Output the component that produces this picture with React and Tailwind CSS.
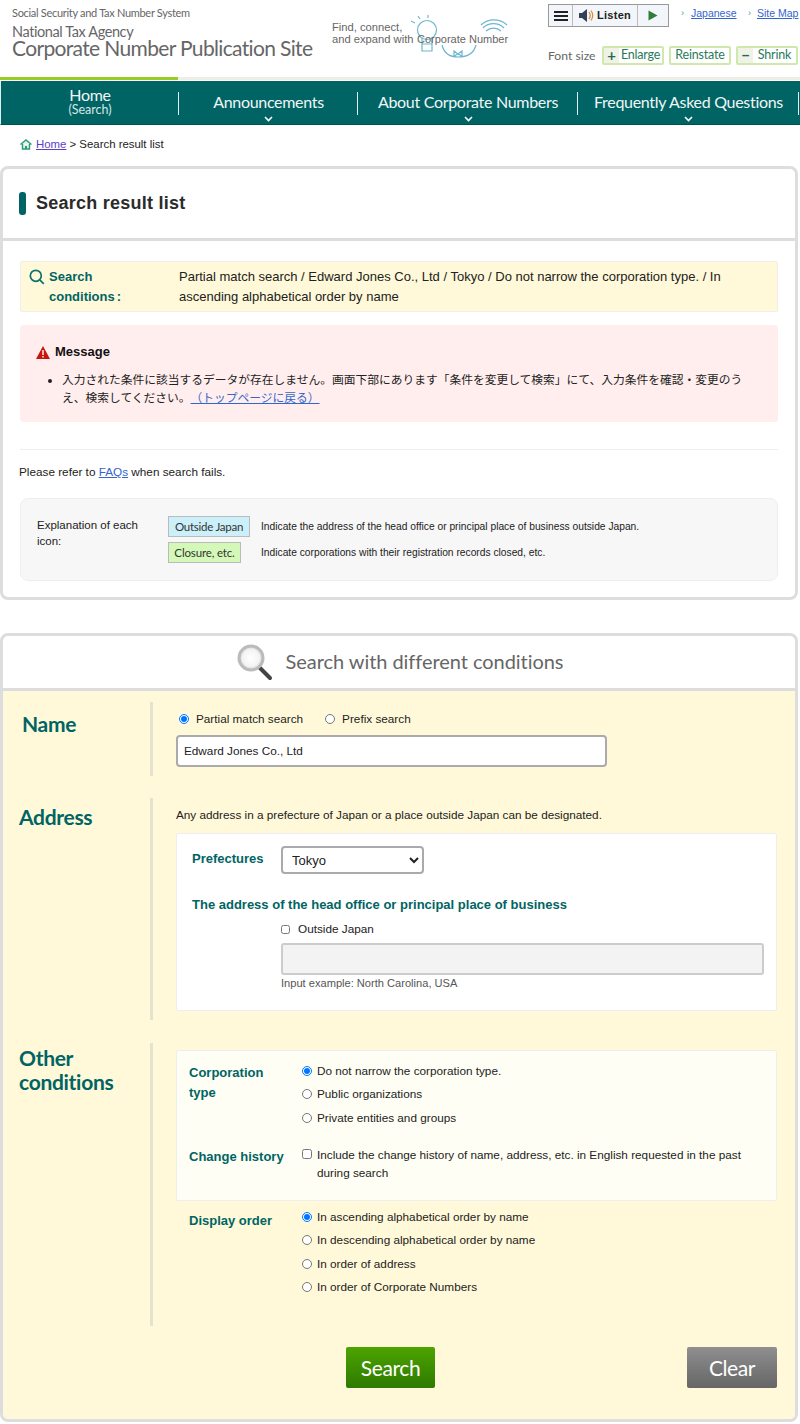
import React from "react";

const Chev = () => (
  <svg width="9" height="6" viewBox="0 0 9 6" className="block mx-auto">
    <path d="M1 1l3.500 3.500L8 1" fill="none" stroke="#fff" strokeWidth="1.600" />
  </svg>
);

const Radio = ({ label, checked, cls = "" }) => (
  <label className={`flex items-center gap-[5px] text-[11.750px] leading-[20px] text-[#222] whitespace-nowrap ${cls}`}>
    <input type="radio" readOnly checked={!!checked} className="m-0 w-[10px] h-[10px] accent-[#0075ff]" />
    <span>{label}</span>
  </label>
);

const Toolbar = () => (
  <div className="flex h-[23px] w-[121px] border border-[#999] bg-[#f2f5f9] shrink-0">
    <div className="w-[24px] flex flex-col justify-center gap-[2px] items-center border-r border-[#bbb]">
      <span className="block w-[14px] h-[2px] bg-[#222]" />
      <span className="block w-[14px] h-[2px] bg-[#222]" />
      <span className="block w-[14px] h-[2px] bg-[#222]" />
    </div>
    <div className="w-[65px] flex items-center justify-center gap-[3px] border-r border-[#bbb]">
      <svg width="15" height="13" viewBox="0 0 15 13">
        <path d="M0 4h3l5-4v13l-5-4H0z" fill="#334155" />
        <path d="M10 3q2.500 3.500 0 7M12 1.500q3.500 5 0 10" fill="none" stroke="#d98a3d" strokeWidth="1.200" />
      </svg>
      <span className="font-['Liberation_Sans'] font-bold text-[11px] text-[#222] tracking-[0.3px]">Listen</span>
    </div>
    <div className="flex-1 flex items-center justify-center">
      <svg width="10" height="11" viewBox="0 0 10 11"><path d="M0.500 0.500l9 5-9 5z" fill="#2e7d3a" /></svg>
    </div>
  </div>
);

const SizeBtn = ({ children, icon }) => (
  <div className="flex items-center h-[19px] w-[62px] border-2 border-[#cfe8ae] rounded-[2px] text-[12.500px] tracking-[-0.2px] text-[#2a7a5a] font-['Lato'] leading-none shrink-0">
    {icon && <span className="w-[15px] h-full bg-[#f0f2e8] flex items-center justify-center font-bold text-[15px] text-[#1d6b50]">{icon}</span>}
    <span className="flex-1 text-center">{children}</span>
  </div>
);

const NavItem = ({ w, title, sub, chev }) => (
  <div className={`h-[43px] pb-[3px] flex flex-col items-center justify-center ${w} relative`}>
    <div className="absolute right-0 top-[11px] h-[23px] w-px bg-[#dfeeee]" />
    <div className="text-[16px] leading-[17px] tracking-[-0.3px] text-[#f0f6f6] font-['Lato'] whitespace-nowrap">{title}</div>
    {sub && <div className="text-[12.500px] leading-[14px] text-[#d5e5e5] font-['Lato']">{sub}</div>}
    {chev && <div className="absolute bottom-[2px] left-0 right-0"><Chev /></div>}
  </div>
);

const Label = ({ children, cls = "" }) => (
  <div className={`font-['Lato'] font-bold text-[#006464] text-[21px] tracking-[-0.3px] leading-[24px] ${cls}`}>{children}</div>
);

export default function App() {
  return (
    <div className="w-[800px] h-[1424px] bg-white font-['Liberation_Sans','Noto_Sans_CJK_JP',sans-serif] text-[#222] overflow-hidden">
      {/* header */}
      <header className="h-[77px] flex">
        <div className="w-[332px] pl-[12px] pt-[6px] font-['Lato'] text-[#666] shrink-0 whitespace-nowrap">
          <div className="text-[11px] tracking-[-0.3px] leading-[13px]">Social Security and Tax Number System</div>
          <div className="text-[14.500px] tracking-[-0.4px] leading-[17px] mt-[4px]">National Tax Agency</div>
          <div className="text-[21px] tracking-[-0.65px] leading-[22px] -mt-[3px]">Corporate Number Publication Site</div>
        </div>
        <div className="w-[216px] shrink-0 relative">
          <div className="pt-[21px] text-[11.200px] leading-[12px] text-[#666] font-['Liberation_Sans'] whitespace-nowrap">
            <div>Find, connect,</div>
            <div>and expand with</div>
          </div>
          <svg width="120" height="46" viewBox="0 0 120 46" className="absolute left-[66px] top-[14px]" fill="none" stroke="#6fb7d0" strokeWidth="1.200">
            <circle cx="29" cy="16" r="9.500" />
            <path d="M24 24v13h10V24M24 30h10" />
            <path d="M17 9l-4-2M22 5l-2-3M30 4V1" />
            <path d="M88 17a11 11 0 0 1 15 0M85 14a15 15 0 0 1 21 0M83 11a19 19 0 0 1 26 0" />
            <path d="M44 31q3 12 16 12M78 31q-3 12-18 12" />
            <path d="M56 37l4 3 4-3v5l-4-2-4 2z" />
          </svg>
          <div className="absolute left-[85px] top-[33px] text-[11px] leading-[13px] text-[#666] font-['Liberation_Sans'] whitespace-nowrap">Corporate Number</div>
        </div>
        <div className="flex-1 pt-[4px]">
          <div className="flex items-start whitespace-nowrap">
            <Toolbar />
            <div className="flex text-[10.500px] leading-[16px] pt-[1px] ml-[12px]">
              <span className="text-[#3f9a9a] w-[10px] text-[9px]">›</span>
              <a className="underline text-[#3366cc] w-[57px]">Japanese</a>
              <span className="text-[#3f9a9a] w-[9px] text-[9px]">›</span>
              <a className="underline text-[#3366cc]">Site Map</a>
            </div>
          </div>
          <div className="flex items-center mt-[19px] gap-[5px]">
            <div className="text-[12.200px] pt-[1px] text-[#666] font-['Lato'] w-[49px] whitespace-nowrap">Font size</div>
            <SizeBtn icon="+">Enlarge</SizeBtn>
            <SizeBtn>Reinstate</SizeBtn>
            <SizeBtn icon="−">Shrink</SizeBtn>
          </div>
        </div>
      </header>
      <div className="h-[3px] bg-[#eeeee6]"><div className="h-full w-[178px] bg-[#99cc22]" /></div>
      <div className="h-px bg-white" />
      <nav className="bg-[#006464] flex border-l border-[#dfeeee] border-b border-b-[#005050] box-content h-[43px]">
        <NavItem w="w-[178px]" title="Home" sub="(Search)" />
        <NavItem w="w-[179px]" title="Announcements" chev />
        <NavItem w="w-[220px]" title="About Corporate Numbers" chev />
        <NavItem w="w-[221px]" title="Frequently Asked Questions" chev />
      </nav>

      {/* breadcrumb */}
      <div className="h-[41px] pl-[20px] pb-[2px] flex items-center text-[11.400px] text-[#222]">
        <svg width="12" height="11" viewBox="0 0 12 11" className="mr-[4px]" fill="#dff3ea" stroke="#2f9a7a" strokeWidth="1.400">
          <path d="M0.500 5.500L6 1l5.500 4.500M2.500 5v5h7V5" /><path d="M5 10V7h2v3" fill="#2f9a7a" stroke="none" />
        </svg>
        <a className="underline text-[#5a3fc8]">Home</a>
        <span>&nbsp;&gt; Search result list</span>
      </div>

      {/* result panel */}
      <section className="w-[798px] h-[434px] border-[3px] border-[#ddd] rounded-[8px] overflow-hidden">
        <div className="h-[69px] flex items-center pl-[16px] gap-[10px]">
          <span className="w-[7px] h-[23px] rounded-[3px] bg-[#006464]" />
          <h1 className="text-[18px] font-bold text-[#2b2b2b] tracking-[0.25px]">Search result list</h1>
        </div>
        <div className="h-[3px] bg-[#ddd]" />
        <div className="px-[17px] pt-[20px]">
          <div className="h-[51px] bg-[#fff9d9] border border-[#eee] rounded-[2px] flex text-[13px] leading-[20px] pt-[5px] pl-[8px]">
            <svg width="16" height="16" viewBox="0 0 16 16" className="mt-[2px] shrink-0" fill="none" stroke="#0b7070" strokeWidth="1.700">
              <circle cx="6.800" cy="6.800" r="5.500" /><path d="M10.800 10.800l4 4" />
            </svg>
            <div className="w-[134px] pl-[4px] shrink-0 font-bold text-[#006464]">Search<br />conditions<span className="ml-[2px]">:</span></div>
            <div className="w-[560px] text-[#222]">Partial match search / Edward Jones Co., Ltd / Tokyo / Do not narrow the corporation type. / In ascending alphabetical order by name</div>
          </div>
          <div className="mt-[13px] h-[97px] bg-[#ffeeed] rounded-[4px] pl-[16px] pt-[19px]">
            <div className="flex items-center gap-[5px] text-[13px] font-bold text-[#111] leading-[16px]">
              <svg width="14" height="13" viewBox="0 0 14 13"><path d="M7 0l7 13H0z" fill="#c8160c" /><path d="M6.300 4h1.400v5H6.300zM6.300 10h1.400v1.400H6.300z" fill="#fff" /></svg>
              Message
            </div>
            <ul className="mt-[11px] ml-[26px] w-[684px] list-disc text-[11.750px] leading-[17.500px] text-[#222] [text-spacing-trim:space-all]">
              <li>入力された条件に該当するデータが存在しません。画面下部にあります「条件を変更して検索」にて、入力条件を確認・変更のうえ、検索してください。<a className="underline text-[#3366cc]">（トップページに戻る）</a></li>
            </ul>
          </div>
          <div className="mt-[27px] h-px bg-[#eee]" />
          <div className="mt-[13px] -ml-px text-[11.750px] leading-[18px]">Please refer to <a className="underline text-[#3366cc]">FAQs</a> when search fails.</div>
          <div className="mt-[17px] h-[83px] bg-[#f7f7f7] border border-[#eee] rounded-[8px] flex pl-[17px] pt-[17px]">
            <div className="w-[130px] shrink-0 pr-[20px] -ml-px pt-px mr-px text-[11.500px] leading-[16px] text-[#222]">Explanation of each icon:</div>
            <div className="flex flex-col gap-[5px] text-[10.250px] text-[#222] whitespace-nowrap">
              <div className="flex items-center">
                <span className="w-[82px] h-[21px] bg-[#ccf0fa] border border-[#bbb] text-center text-[11.500px] tracking-[-0.25px] leading-[19px] font-['Lato'] text-[#333]">Outside Japan</span>
                <span className="ml-[11px]">Indicate the address of the head office or principal place of business outside Japan.</span>
              </div>
              <div className="flex items-center">
                <span className="w-[73px] h-[21px] bg-[#d4f8b8] border border-[#bbb] text-center text-[11.500px] tracking-[-0.15px] leading-[19px] font-['Lato'] text-[#333]">Closure, etc.</span>
                <span className="ml-[20px]">Indicate corporations with their registration records closed, etc.</span>
              </div>
            </div>
          </div>
        </div>
      </section>

      {/* search panel */}
      <section className="w-[798px] h-[789px] mt-[33px] border-[3px] border-[#ddd] rounded-[8px] overflow-hidden">
        <div className="h-[52px] flex items-center justify-center pl-[2px] gap-[13px]">
          <svg width="36" height="37" viewBox="0 0 36 37">
            <defs><radialGradient id="lens"><stop offset="0" stopColor="#fff" /><stop offset="0.700" stopColor="#f4f4f4" /><stop offset="1" stopColor="#ccc" /></radialGradient></defs>
            <path d="M22 23l11 11" stroke="#444" strokeWidth="4" strokeLinecap="round" />
            <circle cx="14" cy="14" r="12" fill="url(#lens)" stroke="#bbb" strokeWidth="3" />
          </svg>
          <div className="font-['Lato'] text-[20px] tracking-[-0.05px] pb-[2px] text-[#666] whitespace-nowrap">Search with different conditions</div>
        </div>
        <div className="h-[3px] bg-[#ddd]" />
        <div className="h-[731px] bg-[#fff9d9] pt-[11px]">
          {/* Name */}
          <div className="flex h-[74px]">
            <div className="w-[150px] h-full border-r-[3px] border-[#e5e2d0] pl-[19px] pt-[10px] shrink-0"><Label>Name</Label></div>
            <div className="pl-[23px]">
              <div className="flex pt-[7px] pl-[3px]">
                <Radio label="Partial match search" checked cls="gap-[7px] mr-[22px]" />
                <Radio label="Prefix search" cls="gap-[7px]" />
              </div>
              <input readOnly value="Edward Jones Co., Ltd" className="mt-[6px] block w-[431px] h-[32px] bg-white border-2 border-[#aaa] rounded-[4px] pl-[6px] pb-[1px] text-[11.750px] text-[#222]" />
            </div>
          </div>
          {/* Address */}
          <div className="flex h-[222px] mt-[22px]">
            <div className="w-[150px] h-full border-r-[3px] border-[#e5e2d0] pl-[16px] pt-[7px] shrink-0"><Label>Address</Label></div>
            <div className="pl-[23px]">
              <div className="text-[11.750px] leading-[18px] pt-[8px]">Any address in a prefecture of Japan or a place outside Japan can be designated.</div>
              <div className="mt-[9px] w-[601px] h-[178px] bg-white border border-[#eee] rounded-[2px]">
                <div className="flex pl-[15px] pt-[12px]">
                  <div className="w-[89px] text-[13px] font-bold text-[#006464] leading-[26px]">Prefectures</div>
                  <select className="w-[143px] h-[28px] border-2 border-[#aaa] rounded-[4px] bg-white pl-[5px] text-[13px] text-[#222]"><option>Tokyo</option></select>
                </div>
                <div className="pl-[15px] mt-[22px] text-[13px] font-bold text-[#006464] leading-[18px]">The address of the head office or principal place of business</div>
                <div className="pl-[104px] mt-[6px]">
                  <label className="flex items-center gap-[8px] text-[11.750px] leading-[18px]">
                    <input type="checkbox" readOnly className="m-0 w-[9px] h-[9px]" />Outside Japan
                  </label>
                  <div className="mt-[5px] w-[483px] h-[32px] bg-[#f3f3f3] border-2 border-[#ccc] rounded-[3px]" />
                  <div className="text-[11.100px] leading-[16px] text-[#555]">Input example: North Carolina, USA</div>
                </div>
              </div>
            </div>
          </div>
          {/* Other */}
          <div className="flex h-[283px] mt-[23px]">
            <div className="w-[150px] h-full border-r-[3px] border-[#e5e2d0] pl-[16px] pt-[3px] shrink-0"><Label>Other<br />conditions</Label></div>
            <div className="pl-[23px]">
              <div className="mt-[7px] w-[601px] h-[151px] bg-[#fffef4] border border-[#eee] rounded-[2px] pl-[12px] pt-[11px]">
                <div className="flex">
                  <div className="w-[113px] text-[13px] font-bold text-[#006464] leading-[20px] pt-[1px]">Corporation<br />type</div>
                  <div className="flex flex-col gap-[3.300px] -mt-px">
                    <Radio label="Do not narrow the corporation type." checked />
                    <Radio label="Public organizations" />
                    <Radio label="Private entities and groups" />
                  </div>
                </div>
                <div className="flex mt-[18px]">
                  <div className="w-[113px] text-[13px] font-bold text-[#006464] leading-[20px] pt-px">Change history</div>
                  <label className="flex items-start text-[11.750px] leading-[18px] w-[450px]">
                    <input type="checkbox" readOnly className="m-0 mt-[3px] w-[10px] h-[10px] shrink-0" />
                    <span className="pl-[5px]">Include the change history of name, address, etc. in English requested in the past during search</span>
                  </label>
                </div>
              </div>
              <div className="flex pl-[13px] mt-[7px]">
                <div className="w-[113px] text-[13px] font-bold text-[#006464] leading-[20px] pt-[3px]">Display order</div>
                <div className="flex flex-col gap-[3.300px] -mt-px">
                  <Radio label="In ascending alphabetical order by name" checked />
                  <Radio label="In descending alphabetical order by name" />
                  <Radio label="In order of address" />
                  <Radio label="In order of Corporate Numbers" />
                </div>
              </div>
            </div>
          </div>
          {/* Buttons */}
          <div className="flex mt-[21px] pl-[343px]">
            <button className="w-[89px] h-[41px] rounded-[2px] bg-gradient-to-b from-[#4ca400] to-[#2f7a00] text-white text-[21px] tracking-[-0.4px] font-['Lato']">Search</button>
            <button className="ml-[252px] w-[90px] h-[41px] rounded-[2px] bg-gradient-to-b from-[#8f8f8f] to-[#666] text-white text-[21px] tracking-[-0.4px] font-['Lato']">Clear</button>
          </div>
        </div>
      </section>
    </div>
  );
}
